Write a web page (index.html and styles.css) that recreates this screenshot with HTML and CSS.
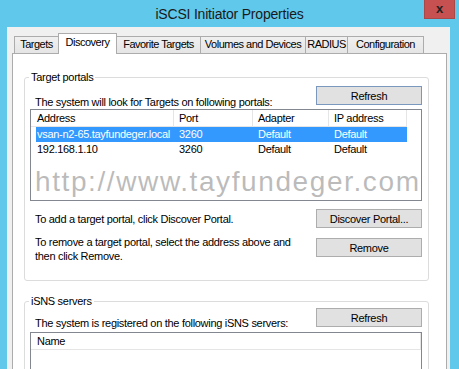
FILE: index.html
```html
<!DOCTYPE html>
<html lang="en">
<head>
    <meta charset="UTF-8">
    <title>iSCSI Initiator Properties</title>
    <link rel="stylesheet" href="styles.css">
</head>
<body>
    <div class="window">
        <div class="titlebar">
            <span class="title">iSCSI Initiator Properties</span>
            <button class="close-button" type="button">x</button>
        </div>

        <div class="client">
            <div class="tabs">
                <div class="tab tab-targets">Targets</div>
                <div class="tab tab-discovery active">Discovery</div>
                <div class="tab tab-favorite">Favorite Targets</div>
                <div class="tab tab-volumes">Volumes and Devices</div>
                <div class="tab tab-radius">RADIUS</div>
                <div class="tab tab-config">Configuration</div>
            </div>

            <div class="panel">
                <!-- Target portals -->
                <fieldset class="group group-portals">
                    <legend>Target portals</legend>
                    <div class="group-row first-row">
                        <p class="hint">The system will look for Targets on following portals:</p>
                        <button class="win-button default" type="button">Refresh</button>
                    </div>
                    <div class="listview portal-list">
                        <div class="list-header">
                            <span>Address</span>
                            <span>Port</span>
                            <span>Adapter</span>
                            <span>IP address</span>
                        </div>
                        <div class="list-row selected">
                            <span>vsan-n2-65.tayfundeger.local</span>
                            <span>3260</span>
                            <span>Default</span>
                            <span>Default</span>
                        </div>
                        <div class="list-row">
                            <span>192.168.1.10</span>
                            <span>3260</span>
                            <span>Default</span>
                            <span>Default</span>
                        </div>
                    </div>
                    <div class="group-row add-row">
                        <p class="hint">To add a target portal, click Discover Portal.</p>
                        <button class="win-button" type="button">Discover Portal...</button>
                    </div>
                    <div class="group-row remove-row">
                        <p class="hint">To remove a target portal, select the address above and<br>then click Remove.</p>
                        <button class="win-button" type="button">Remove</button>
                    </div>
                </fieldset>

                <!-- iSNS servers -->
                <fieldset class="group group-isns">
                    <legend>iSNS servers</legend>
                    <div class="group-row isns-row">
                        <p class="hint">The system is registered on the following iSNS servers:</p>
                        <button class="win-button" type="button">Refresh</button>
                    </div>
                    <div class="listview isns-list">
                        <div class="list-header single">
                            <span>Name</span>
                        </div>
                    </div>
                </fieldset>

                <div class="watermark">http://www.tayfundeger.com</div>
            </div>
        </div>
    </div>
</body>
</html>
```

FILE: styles.css
```css
html, body {
    margin: 0;
    padding: 0;
    background: #60c8ea;
}

body {
    font-family: "Liberation Sans", Arial, sans-serif;
    font-size: 11px;
    letter-spacing: -0.3px;
    color: #000;
}

.window {
    width: 459px;
    height: 369px;
    overflow: hidden;
    background: #60c8ea;
}

/* title bar */
.titlebar {
    position: relative;
    height: 27px;
    display: flex;
    align-items: center;
    justify-content: center;
}

.title {
    font-size: 14px;
    letter-spacing: -0.2px;
    color: #1a1a1a;
    margin-top: 1px;
}

.close-button {
    position: absolute;
    top: 0;
    left: 424px;
    width: 31px;
    height: 19px;
    padding: 0;
    background: #c75050;
    border: 1px solid #a84848;
    border-top: none;
    color: #222;
    font-family: "Liberation Sans", Arial, sans-serif;
    font-size: 13px;
    font-weight: bold;
    line-height: 16px;
}

/* window client area */
.client {
    margin-left: 7px;
    width: 443px;
    height: 342px;
    background: #f0f0f0;
    padding-top: 6px;
    box-sizing: border-box;
}

.tabs {
    display: flex;
    align-items: flex-end;
    height: 20px;
    padding-left: 7px;
}

.tab {
    box-sizing: border-box;
    height: 17px;
    margin-right: -1px;
    border: 1px solid #acacac;
    border-bottom: none;
    background: linear-gradient(#f0f0f0, #e5e5e5);
    text-align: center;
    line-height: 15px;
    letter-spacing: -0.5px;
    white-space: nowrap;
}

.tab.active {
    position: relative;
    z-index: 1;
    height: 21px;
    margin-bottom: -1px;
    background: #fff;
    line-height: 17px;
}

.tab-targets { width: 45px; }
.tab-discovery { width: 59px; }
.tab-favorite { width: 85px; }
.tab-volumes { width: 106px; }
.tab-radius { width: 43px; }
.tab-config { width: 77px; }

.panel {
    position: relative;
    margin-left: 5px;
    width: 435px;
    height: 320px;
    box-sizing: border-box;
    background: #fff;
    border: 1px solid #acacac;
    border-bottom: none;
    padding-top: 16px;
}

/* group boxes */
.group {
    margin: 0 0 0 11px;
    width: 405px;
    box-sizing: border-box;
    border: 1px solid #dcdcdc;
    border-radius: 3px;
    padding: 0 6px 0 5px;
    min-width: 0;
}

.group legend {
    padding: 0 2px;
    margin-left: -1px;
    line-height: 14px;
}

.group-isns {
    margin-top: 13px;
    height: 90px;
}

.group-portals {
    padding-bottom: 17px;
}

.group-row {
    display: flex;
    justify-content: space-between;
    align-items: flex-start;
}

.hint {
    margin: 0;
    padding-left: 5px;
    line-height: 14px;
}

.first-row {
    margin-top: 2px;
}

.first-row .hint {
    margin-top: 9px;
}

.add-row {
    margin-top: 8px;
}

.add-row .hint {
    margin-top: 3px;
}

.remove-row {
    margin-top: 7px;
}

.remove-row .win-button {
    margin-top: 3px;
}

.isns-row .hint {
    margin-top: 8px;
}

/* buttons */
.win-button {
    width: 106px;
    height: 19px;
    flex-shrink: 0;
    padding: 0;
    background: #e1e1e1;
    border: 1px solid #adadad;
    font-family: "Liberation Sans", Arial, sans-serif;
    font-size: 11px;
    letter-spacing: -0.3px;
    color: #000;
}

.win-button.default {
    border-color: #7a98bd;
}

/* list views */
.listview {
    box-sizing: border-box;
    border: 1px solid #828790;
    background: #fff;
}

.portal-list {
    height: 92px;
}

.isns-list {
    margin-top: 2px;
    height: 40px;
    border-bottom: none;
}

.list-header {
    display: grid;
    grid-template-columns: 143px 79px 76px 78px;
    height: 17px;
    line-height: 16px;
}

.list-header span {
    border-right: 1px solid #e5e5e5;
    border-bottom: 1px solid #e5e5e5;
    padding-left: 5px;
}

.list-header span:first-child {
    padding-left: 6px;
}

.list-header.single {
    grid-template-columns: 390px;
}

.list-row {
    display: grid;
    grid-template-columns: 138px 79px 76px 78px;
    margin-left: 5px;
    width: 371px;
    height: 15px;
    line-height: 15px;
}

.list-row span {
    padding-left: 5px;
    white-space: nowrap;
}

.list-row span:first-child {
    padding-left: 1px;
}

.list-row.selected {
    background: #3399ff;
    color: #fff;
}

/* site watermark over the dialog */
.watermark {
    position: absolute;
    left: 22px;
    top: 114px;
    font-size: 28px;
    line-height: 28px;
    letter-spacing: 1.6px;
    color: rgba(120, 120, 120, 0.5);
    white-space: nowrap;
    pointer-events: none;
}
```
